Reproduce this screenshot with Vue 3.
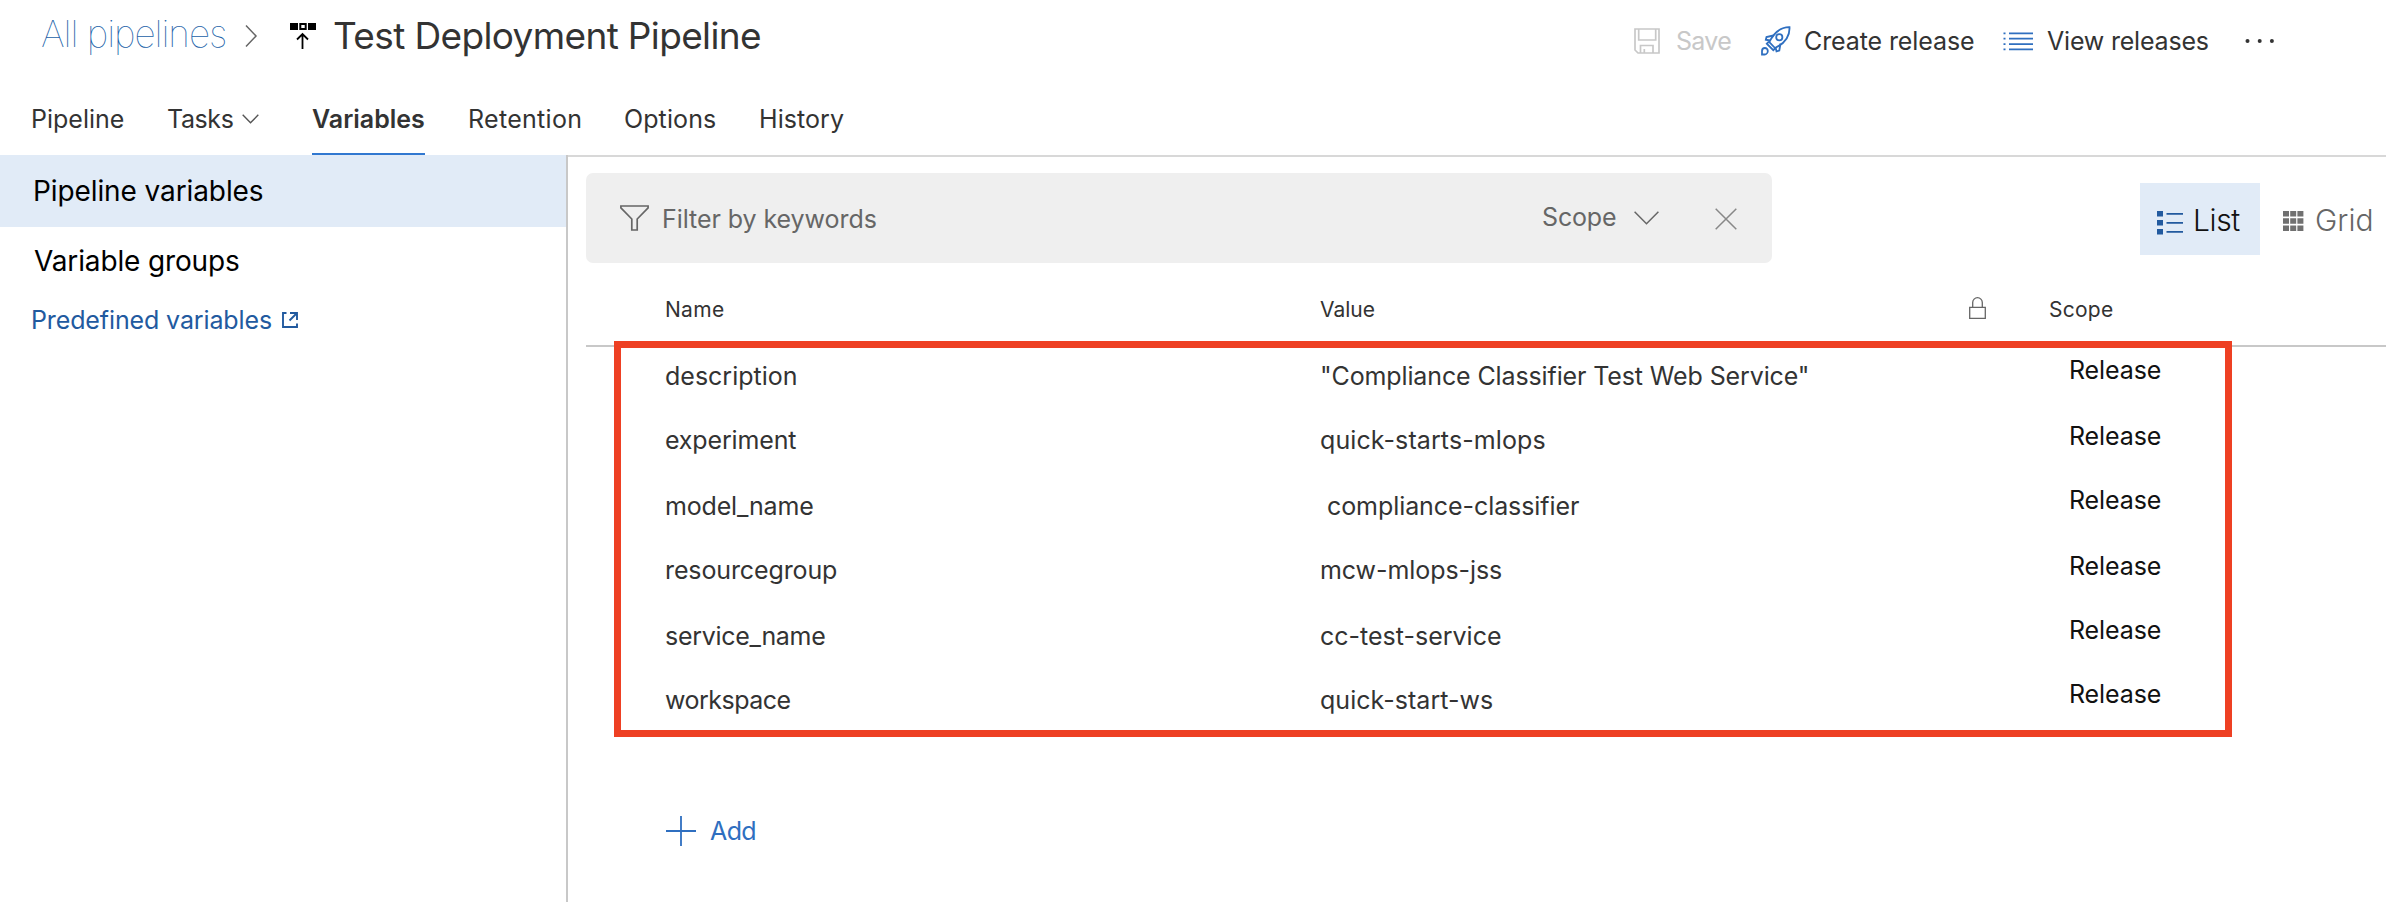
<script setup>
const tabs = [
  { label: 'Pipeline', track: 0 },
  { label: 'Tasks', track: -0.4, menu: true },
  { label: 'Variables', track: 0, active: true },
  { label: 'Retention', track: 0.3 },
  { label: 'Options', track: 0.1 },
  { label: 'History', track: 0.07 },
]

const variables = [
  { name: 'description', value: '"Compliance Classifier Test Web Service"', nameTrack: 0, valueTrack: -0.12 },
  { name: 'experiment', value: 'quick-starts-mlops', nameTrack: -0.15, valueTrack: 0.1, raised: true, low: true },
  { name: 'model_name', value: '\u00a0compliance-classifier', nameTrack: -0.18, valueTrack: -0.07 },
  { name: 'resourcegroup', value: 'mcw-mlops-jss', nameTrack: -0.12, valueTrack: -0.07, raised: true, low: true },
  { name: 'service_name', value: 'cc-test-service', nameTrack: -0.3, valueTrack: 0 },
  { name: 'workspace', value: 'quick-start-ws', nameTrack: -0.5, valueTrack: 0.04, raised: true },
]

const track = (v) => ({ letterSpacing: v + 'px' })
</script>

<template>
  <div class="page">
    <header class="top">
      <div class="crumbs">
        <a class="all">All pipelines</a>
        <svg class="sep" width="13" height="24" viewBox="0 0 13 24"><path d="M1 1.5 11 12 1 22.5" fill="none" stroke="#666" stroke-width="1.5" /></svg>
        <svg class="deploy" width="26" height="26" viewBox="0 0 26 26">
          <path d="M0 0h8v7H0zM18 0h8v7h-8z" fill="#000" />
          <path d="M10.3 1h5.4v5h-5.4z" fill="none" stroke="#000" stroke-width="2" />
          <path d="M12.5 26V11.5M7 16.5l5.5-5.5 5.5 5.5" fill="none" stroke="#000" stroke-width="1.8" />
        </svg>
        <h1>Test Deployment Pipeline</h1>
      </div>
      <div class="actions">
        <span class="action save">
          <svg width="26" height="26" viewBox="0 0 26 26" fill="none" stroke="#c8c8c8" stroke-width="1.7">
            <path d="M1 1h24v24H4l-3-3zM4.700 1v11h17V1M6.500 25v-7.500h12.500V25M10.300 25v-4" />
          </svg>
          <span>Save</span>
        </span>
        <span class="action create">
          <svg width="30" height="30" viewBox="0 0 30 30" fill="none" stroke="#2f6fc0" stroke-width="1.8">
            <path d="M28.500 1.200C20 1 13.500 6 8.300 16l5.700 6C23.500 17.500 29 11 28.500 1.200z" />
            <circle cx="18.300" cy="11.200" r="3.100" />
            <path d="M12.300 9.500 5.500 11l-.7 2.700 4.200.8M19.500 17.500l-1.200 7-2.800.8-1-4M8 15.500l-2.200 2.200 6.500 6.500 2.200-2.200" />
            <path d="M1 28.500v-3.200c0-2.200 1.300-3.300 2.900-3.300 1.700 0 2.900 1.300 2.900 2.900s-1.300 3.600-3.200 3.600z" />
          </svg>
          <span>Create release</span>
        </span>
        <span class="action view">
          <svg width="30" height="20" viewBox="0 0 30 20" fill="#2f6fc0">
            <path d="M6 1.500h24v1.800H6zM6 6.800h24v1.800H6zM6 12.200h24V14H6zM6 17.500h24v1.800H6zM.5 1.500h2v1.800h-2zM.5 6.800h2v1.800h-2zM.5 12.200h2V14h-2zM.5 17.500h2v1.800h-2z" />
          </svg>
          <span>View releases</span>
        </span>
        <svg class="more" width="30" height="6" viewBox="0 0 30 6" fill="#333">
          <circle cx="2.500" cy="3" r="2" /><circle cx="14.700" cy="3" r="2" /><circle cx="26.900" cy="3" r="2" />
        </svg>
      </div>
    </header>

    <nav class="tabs">
      <a v-for="t in tabs" :key="t.label" class="tab" :class="{ active: t.active }" :style="track(t.track)">
        {{ t.label }}<svg v-if="t.menu" class="caret" width="17" height="10" viewBox="0 0 17 10"><path d="M.7.8 8.500 8.800 16.300.8" fill="none" stroke="#555" stroke-width="1.400" /></svg>
      </a>
    </nav>

    <div class="body">
      <aside class="side">
        <a class="item selected">Pipeline variables</a>
        <a class="item groups">Variable groups</a>
        <a class="link">
          <span>Predefined variables</span>
          <svg width="16" height="16" viewBox="0 0 16 16" fill="none" stroke="#225a9f" stroke-width="1.900">
            <path d="M4.500 1H1v14h14v-3.500M8 1h7v7M15 1 7.500 8.500" />
          </svg>
        </a>
      </aside>

      <main class="content">
        <div class="bar">
          <div class="filter">
            <svg class="funnel" width="29" height="26" viewBox="0 0 29 26"><path d="M.9 1h27.200v1.800L17.200 14v11h-5.400V14L.9 2.800z" fill="none" stroke="#666" stroke-width="1.700" /></svg>
            <span class="hint">Filter by keywords</span>
            <span class="scope">Scope</span>
            <svg class="down" width="25" height="14" viewBox="0 0 25 14"><path d="M.6.8 12.500 12.800 24.400.8" fill="none" stroke="#666" stroke-width="1.500" /></svg>
            <svg class="clear" width="22" height="22" viewBox="0 0 22 22"><path d="m.7.7 20.600 20.600M21.300.7.7 21.300" fill="none" stroke="#888" stroke-width="1.500" /></svg>
          </div>
          <div class="modes">
            <span class="mode list">
              <svg width="26" height="24" viewBox="0 0 26 24" fill="#225a9f">
                <path d="M0 0h6v5.500H0zM0 9h6v5.500H0zM0 18h6v5.500H0zM9.500 2H26v1.800H9.500zM9.500 11H26v1.800H9.500zM9.500 20H26v1.800H9.500z" />
              </svg>
              <span>List</span>
            </span>
            <span class="mode grid">
              <svg width="21" height="20" viewBox="0 0 21 20" fill="#707070">
                <path d="M0 0h6v5.500H0zM7.200 0h6v5.500h-6zM14.400 0h6v5.500h-6zM0 7.200h6v5.500H0zM7.200 7.200h6v5.500h-6zM14.400 7.200h6v5.500h-6zM0 14.400h6v5.500H0zM7.200 14.400h6v5.500h-6zM14.400 14.400h6v5.500h-6z" />
              </svg>
              <span>Grid</span>
            </span>
          </div>
        </div>

        <div class="table">
          <div class="head">
            <span class="h-name">Name</span>
            <span>Value</span>
            <svg width="17" height="22" viewBox="0 0 17 22" fill="none" stroke="#666" stroke-width="1.300">
              <path d="M.7 10.300h15.600v11H.7zM3.700 10.300V5.500a4.800 4.800 0 0 1 9.600 0v4.800" />
            </svg>
            <span class="h-scope">Scope</span>
          </div>
          <div class="rows">
            <div v-for="v in variables" :key="v.name" class="row" :class="{ raised: v.raised }">
              <span :style="track(v.nameTrack)">{{ v.name }}</span>
              <span :style="track(v.valueTrack)">{{ v.value }}</span>
              <span class="release" :class="{ low: v.low }">Release</span>
            </div>
          </div>
          <div class="outline"></div>
        </div>

        <a class="add">
          <svg width="30" height="30" viewBox="0 0 30 30"><path d="M15 0v30M0 15h30" stroke="#2f6fc0" stroke-width="1.800" /></svg>
          <span>Add</span>
        </a>
      </main>
    </div>
  </div>
</template>

<style>
body { margin: 0; background: #fff; }
</style>

<style scoped>
.page {
  width: 2386px;
  height: 902px;
  overflow: hidden;
  display: flex;
  flex-direction: column;
  background: #fff;
  color: #333;
  font: 400 25px/1.2 Inter, "Liberation Sans", sans-serif;
  white-space: nowrap;
}
svg { display: block; flex: none; }

.top { display: flex; justify-content: space-between; height: 80px; }
.crumbs { display: flex; align-items: flex-start; padding-left: 41px; }
.all { width: 204px; font-size: 37px; line-height: 67px; font-weight: 100; letter-spacing: -1.080px; color: #225fa8; }
.sep { margin-top: 24px; }
.deploy { margin: 23px 0 0 32px; }
h1 { margin: 0 0 0 17px; font-size: 37px; line-height: 71px; font-weight: 400; letter-spacing: -.64px; }

.actions { display: flex; align-items: center; width: 752px; height: 81px; }
.action { display: flex; align-items: center; }
.save { width: 127px; gap: 16px; color: #c8c8c8; letter-spacing: -.7px; }
.create { width: 242px; gap: 13px; letter-spacing: -.1px; }
.view { width: 242px; gap: 14px; letter-spacing: -.2px; }
.more { margin-top: 1px; }

.tabs {
  display: grid;
  grid-template-columns: 136px 145px 156px 156px 135px auto;
  justify-content: start;
  height: 75px;
  padding-left: 31px;
}
.tab { display: flex; align-items: center; justify-self: start; box-sizing: border-box; height: 75px; padding-top: 3px; }
.active { border-bottom: 2px solid #3178d0; padding-top: 5px; font-weight: 600; }
.caret { margin: 0 0 0 9px; }

.body { display: flex; flex: 1; }
.side { width: 566px; border-right: 2px solid #c8c8c8; }
.item { display: block; height: 72px; padding-left: 33px; font-size: 28px; line-height: 72px; letter-spacing: -.1px; color: #000; }
.selected { background: #e1ebf7; }
.groups { padding-left: 34px; line-height: 68px; height: 60px; letter-spacing: -.14px; }
.link { display: flex; align-items: center; gap: 10px; height: 66px; padding-left: 31px; color: #225a9f; letter-spacing: -.12px; }

.content { flex: 1; border-top: 2px solid #d8d8d8; padding: 16px 0 0 18px; }
.bar { display: flex; height: 90px; }
.filter { display: flex; align-items: center; width: 1186px; border-radius: 7px; background: #efefef; color: #666; }
.funnel { margin-left: 34px; }
.hint { flex: 1; margin-left: 13px; padding-top: 1px; letter-spacing: -.06px; }
.scope { width: 92px; padding-bottom: 3px; letter-spacing: -.15px; }
.clear { margin: 1px 35px 0 56px; }
.modes { display: flex; align-items: flex-start; padding: 10px 0 0 368px; font-size: 30px; font-weight: 300; }
.mode { display: flex; align-items: center; height: 72px; }
.list { width: 103px; padding-left: 17px; gap: 10px; background: #e1ebf7; color: #111; letter-spacing: -.4px; }
.list svg { margin-top: 8px; }
.list span, .grid span { padding-top: 1px; }
.grid { padding-left: 23px; gap: 11px; color: #666; }
.grid svg { margin-top: 4px; }

.table { position: relative; }
.head {
  display: grid;
  grid-template-columns: 655px 649px 80px auto;
  align-items: center;
  justify-content: start;
  box-sizing: border-box;
  height: 84px;
  padding: 11px 0 0 79px;
  border-bottom: 2px solid #c8c8c8;
  font-size: 21px;
}
.head svg { margin-top: -3px; }
.h-name { letter-spacing: .3px; }
.h-scope { letter-spacing: .25px; }
.rows { margin-top: -4px; padding-left: 79px; }
.row { display: grid; grid-template-columns: 655px 749px auto; align-items: center; height: 65px; box-sizing: border-box; }
.raised { padding-bottom: 2px; }
.release { padding-bottom: 12px; color: #111; letter-spacing: -.1px; }
.low { padding-bottom: 8px; }
.outline { position: absolute; left: 28px; top: 78px; width: 1604px; height: 382px; border: 7px solid #ee4023; }

.add { display: flex; align-items: center; gap: 14px; height: 30px; margin-top: 83px; padding-left: 80px; color: #2f6fc0; letter-spacing: -.6px; }
</style>
